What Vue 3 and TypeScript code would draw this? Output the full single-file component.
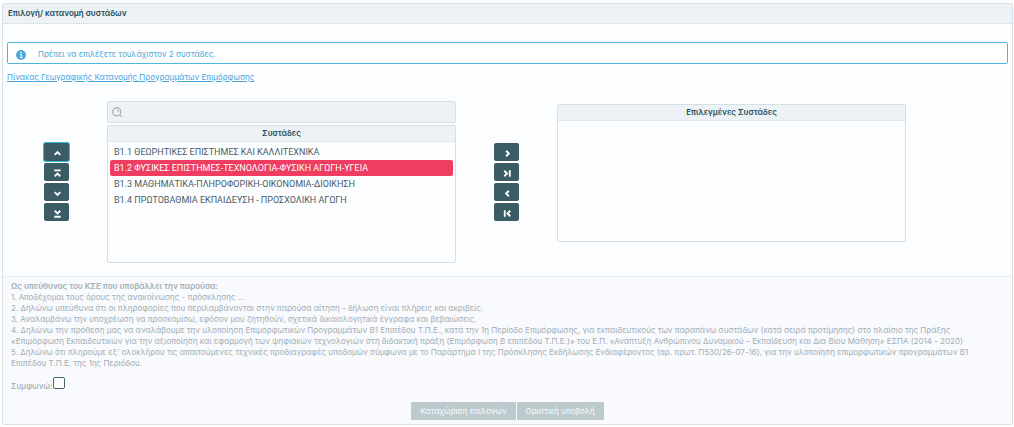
<script setup lang="ts">
import { ref } from 'vue'

interface Control {
  label: string
  path: string
}

const orderControls: Control[] = [
  { label: 'Μετακίνηση πάνω', path: 'M3 7.5 6 4.5 9 7.5' },
  { label: 'Μετακίνηση στην αρχή', path: 'M2.5 2.5H9.5M3 9 6 6 9 9' },
  { label: 'Μετακίνηση κάτω', path: 'M3 4.5 6 7.5 9 4.5' },
  { label: 'Μετακίνηση στο τέλος', path: 'M2.5 9.5H9.5M3 3 6 6 9 3' },
]

const transferControls: Control[] = [
  { label: 'Προσθήκη', path: 'M4.5 3 7.5 6 4.5 9' },
  { label: 'Προσθήκη όλων', path: 'M2.5 3 5.5 6 2.5 9M8.5 2.5V9.5' },
  { label: 'Αφαίρεση', path: 'M7.5 3 4.5 6 7.5 9' },
  { label: 'Αφαίρεση όλων', path: 'M9 3 6 6 9 9M3 2.5V9.5' },
]

const clusters: string[] = [
  'Β1.1 ΘΕΩΡΗΤΙΚΕΣ ΕΠΙΣΤΗΜΕΣ ΚΑΙ ΚΑΛΛΙΤΕΧΝΙΚΑ',
  'Β1.2 ΦΥΣΙΚΕΣ ΕΠΙΣΤΗΜΕΣ-ΤΕΧΝΟΛΟΓΙΑ-ΦΥΣΙΚΗ ΑΓΩΓΗ-ΥΓΕΙΑ',
  'Β1.3 ΜΑΘΗΜΑΤΙΚΑ-ΠΛΗΡΟΦΟΡΙΚΗ-ΟΙΚΟΝΟΜΙΑ-ΔΙΟΙΚΗΣΗ',
  'Β1.4 ΠΡΩΤΟΒΑΘΜΙΑ ΕΚΠΑΙΔΕΥΣΗ - ΠΡΟΣΧΟΛΙΚΗ ΑΓΩΓΗ',
]

const terms: string[] = [
  '1. Αποδέχομαι τους όρους της ανακοίνωσης - πρόσκλησης ...',
  '2. Δηλώνω υπεύθυνα ότι οι πληροφορίες που περιλαμβάνονται στην παρούσα αίτηση - δήλωση είναι πλήρεις και ακριβείς.',
  '3. Αναλαμβάνω την υποχρέωση να προσκομίσω, εφόσον μου ζητηθούν, σχετικά δικαιολογητικά έγγραφα και βεβαιώσεις.',
  '4. Δηλώνω την πρόθεση μας να αναλάβουμε την υλοποίηση Επιμορφωτικών Προγραμμάτων Β1 Επιπέδου Τ.Π.Ε., κατά την 1η Περίοδο Επιμόρφωσης, για εκπαιδευτικούς των παραπάνω συστάδων (κατά σειρά προτίμησης) στο πλαίσιο της Πράξης «Επιμόρφωση Εκπαιδευτικών για την αξιοποίηση και εφαρμογή των ψηφιακών τεχνολογιών στη διδακτική πράξη (Επιμόρφωση Β επιπέδου Τ.Π.Ε.)» του Ε.Π. «Ανάπτυξη Ανθρώπινου Δυναμικού – Εκπαίδευση και Δια Βίου Μάθηση» ΕΣΠΑ (2014 - 2020)',
  '5. Δηλώνω ότι πληρούμε εξ’ ολοκλήρου τις απαιτούμενες τεχνικές προδιαγραφές υποδομών σύμφωνα με το Παράρτημα Ι της Πρόσκλησης Εκδήλωσης Ενδιαφέροντος (αρ. πρωτ. Π530/26-07-16), για την υλοποίηση επιμορφωτικών προγραμμάτων Β1 Επιπέδου Τ.Π.Ε. της 1ης Περιόδου.',
]

const selected = ref(1)
const query = ref('')
const agreed = ref(false)
</script>

<template>
  <main class="panel">
    <h1 class="panel-title">Επιλογή/ κατανομή συστάδων</h1>

    <div class="content">
      <div class="notice" role="status">
        <svg class="info" viewBox="0 0 10 10" aria-hidden="true">
          <circle cx="5" cy="5" r="5" fill="#4cabdb" />
          <path d="M4 4.3H5.4V7.4M4 7.6H6.5" fill="none" stroke="#fff" stroke-width="1" />
          <circle cx="5" cy="2.5" r=".8" fill="#fff" />
        </svg>
        <span>Πρέπει να επιλέξετε τουλάχιστον 2 συστάδες.</span>
      </div>
      <a class="link" href="#">Πίνακας Γεωγραφικής Κατανομής Προγραμμάτων Επιμόρφωσης</a>

      <div class="picklist">
        <div class="controls">
          <button v-for="c in orderControls" :key="c.label" type="button" class="control" :class="{ active: c === orderControls[0] }" :aria-label="c.label">
            <svg viewBox="0 0 12 12" aria-hidden="true"><path :d="c.path" /></svg>
          </button>
        </div>

        <div class="source">
          <label class="search">
            <svg viewBox="0 0 12 12" aria-hidden="true">
              <circle cx="5.2" cy="5.2" r="4.4" />
              <path d="M8.3 8.3 11.2 11.2M5.2 3A2.2 2.2 0 0 1 7.3 5.2" />
            </svg>
            <input v-model="query" type="text" aria-label="Αναζήτηση συστάδων" />
          </label>
          <section class="list">
            <h2>Συστάδες</h2>
            <ul role="listbox" aria-label="Συστάδες">
              <li v-for="(name, i) in clusters" :key="name" role="option" :aria-selected="i === selected" :class="{ selected: i === selected }" @click="selected = i">{{ name }}</li>
            </ul>
          </section>
        </div>

        <div class="controls">
          <button v-for="c in transferControls" :key="c.label" type="button" class="control" :aria-label="c.label">
            <svg viewBox="0 0 12 12" aria-hidden="true"><path :d="c.path" /></svg>
          </button>
        </div>

        <section class="list target">
          <h2>Επιλεγμένες Συστάδες</h2>
          <ul role="listbox" aria-label="Επιλεγμένες Συστάδες"></ul>
        </section>
      </div>
    </div>

    <footer class="declaration">
      <p class="lead">Ως υπεύθυνος του ΚΣΕ που υποβάλλει την παρούσα:</p>
      <p v-for="t in terms" :key="t">{{ t }}</p>
      <div class="agree">
        <label for="agree">Συμφωνώ:</label>
        <input id="agree" v-model="agreed" type="checkbox" />
      </div>
      <div class="actions">
        <button type="button" disabled>Καταχώριση επιλογών</button>
        <button type="button" disabled>Οριστική υποβολή</button>
      </div>
    </footer>
  </main>
</template>

<style>
body {
  background: #fdfdfe;
}
</style>

<style scoped>
* {
  box-sizing: border-box;
}

.panel {
  margin: 3px 1px 0 2px;
  border: 1px solid #d9e1e7;
  border-radius: 2px;
  background: #fcfdfe;
  color: #4a5c66;
  font: 8px/11px Inter, Roboto, sans-serif;
}

.panel-title {
  margin: 0;
  padding: 3px 5px 4px;
  border-bottom: 1px dotted #ccd7df;
  background: #edf2f6;
  color: #1c4a58;
  font-size: 8px;
  line-height: 12px;
  font-weight: 600;
}

.content {
  padding: 18px 4px 13px;
}

.notice {
  display: flex;
  align-items: center;
  gap: 12px;
  height: 22px;
  padding: 3px 8px 0;
  border: 1px solid #4fb5dc;
  border-radius: 2px;
  background: #fff;
  color: #4ca9d9;
}

.info {
  width: 10px;
  height: 10px;
}

.link {
  display: block;
  width: fit-content;
  margin-top: 8px;
  color: #4ca5dc;
}

.picklist {
  display: grid;
  grid-template-columns: 25px 1fr 25px 1fr;
  align-items: center;
  gap: 38px;
  margin: 18px 102px 0 37px;
}

.controls {
  display: grid;
  gap: 2px;
}

.control {
  display: flex;
  align-items: center;
  justify-content: center;
  height: 18px;
  padding: 2px 0 0 1px;
  border: 0;
  border-radius: 2px;
  background: #3b5c64;
}

.control.active {
  box-shadow: 0 0 0 1px #35b8dc;
}

.control svg {
  width: 11px;
  height: 11px;
  fill: none;
  stroke: #fff;
  stroke-width: 2;
}

.search {
  display: flex;
  align-items: center;
  gap: 4px;
  height: 22px;
  margin-bottom: 2px;
  padding: 0 4px;
  border: 1px solid #d5dfe6;
  border-radius: 2px;
  background: #edf2f6;
}

.search svg {
  width: 11px;
  height: 11px;
  fill: none;
  stroke: #8a9499;
  stroke-width: 1;
}

.search input {
  flex: 1;
  min-width: 0;
  padding: 0;
  border: 0;
  outline: 0;
  background: transparent;
  font: inherit;
}

.list {
  height: 138px;
  border: 1px solid #d5dfe6;
  border-radius: 2px;
}

.list.target {
  align-self: start;
  margin-top: 3px;
}

.list h2 {
  margin: 0;
  border-bottom: 1px dotted #d5dfe6;
  background: #edf2f6;
  color: #1c4a58;
  font-size: 8px;
  line-height: 15px;
  font-weight: 600;
  text-align: center;
}

.list ul {
  margin: 0;
  padding: 2px;
  list-style: none;
}

.list li {
  padding: 1px 4px 0;
  border-radius: 2px;
  font-family: Roboto, sans-serif;
  font-size: 9px;
  line-height: 15px;
  cursor: default;
}

.list li.selected {
  background: #ee3d60;
  color: #fff;
}

.declaration {
  padding: 4px 8px;
  border-top: 1px solid #e8eef3;
  background: #f8fafd;
  color: #a3aeb4;
}

.declaration p {
  margin: 0;
}

.declaration .lead {
  font-weight: 600;
}

.agree {
  display: flex;
  align-items: flex-start;
  gap: 1px;
  margin-top: 8px;
  font-weight: 500;
}

.agree label {
  padding-top: 4px;
}

.agree input {
  appearance: none;
  width: 12px;
  height: 12px;
  margin: 0;
  border: 1px solid #47636d;
  border-radius: 2px;
  background: #fff;
}

.agree input:checked {
  background: #3b5c64;
}

.actions {
  display: flex;
  justify-content: center;
  gap: 1px;
  margin-top: 10px;
}

.actions button {
  height: 18px;
  padding: 0 9px;
  border: 0;
  border-radius: 1px;
  background: #bdcacd;
  color: #f8fafd;
  font: inherit;
}
</style>
